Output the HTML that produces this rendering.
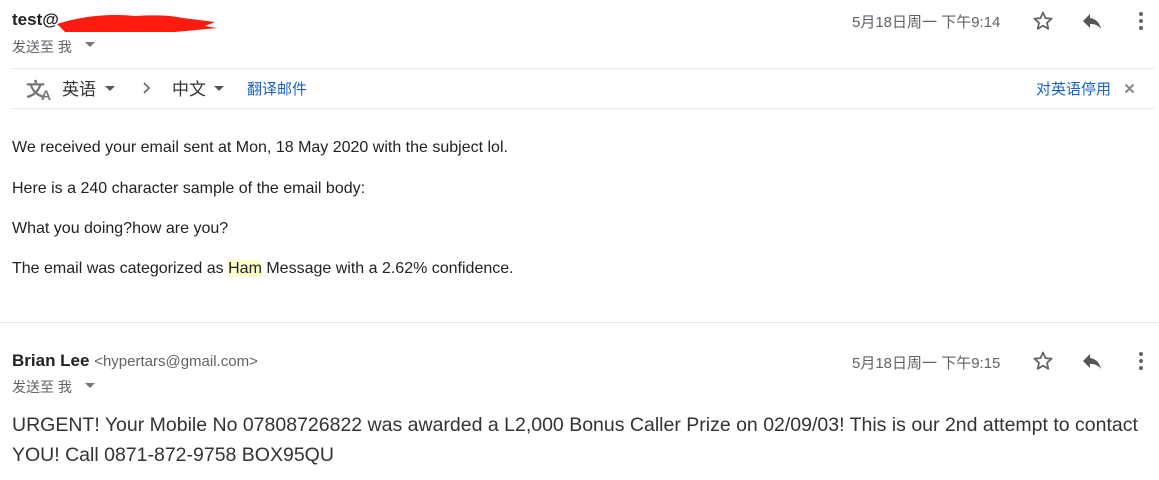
<!DOCTYPE html>
<html><head><meta charset="utf-8"><style>
*{margin:0;padding:0;box-sizing:border-box}
body{width:1159px;height:480px;background:#fff;font-family:"Liberation Sans","Noto Sans CJK SC",sans-serif;color:#222;position:relative;overflow:hidden}
.a{position:absolute;white-space:nowrap}
.g{color:#5f6368}
.b{color:#1a62c6}
.line{position:absolute;height:1px;background:#e6e8ec}
.body{font-size:16px;color:#222}
.ic{position:absolute}
</style></head><body>
<div class="a" style="left:12px;top:10px;font-size:17px;font-weight:bold;color:#222">test@</div>
<svg class="ic" style="left:55px;top:10px" width="165" height="24"><path d="M2 14 Q40 2 80 6 Q110 4 128 8 L160 12 L150 16 L162 18 L120 22 L60 22 L10 22 Z" fill="#ff1a10"/></svg>
<div class="a g" style="left:12px;top:37px;font-size:14px">发送至 我</div>
<svg class="ic" style="left:85px;top:42px" width="10" height="6"><path d="M0 0h10L5 5z" fill="#777"/></svg>
<div class="a g" style="left:852px;top:11px;font-size:15px">5月18日周一 下午9:14</div>
<svg class="ic" style="left:1031px;top:9px" width="24" height="24" viewBox="0 0 24 24"><path d="M12 3.5l2.5 5.6 6.1.6-4.6 4.1 1.3 6-5.3-3.1-5.3 3.1 1.3-6-4.6-4.1 6.1-.6z" fill="none" stroke="#666" stroke-width="1.8" stroke-linejoin="round"/></svg>
<svg class="ic" style="left:1080px;top:9px" width="24" height="24" viewBox="0 0 24 24"><path d="M10 9V5l-7 7 7 7v-4.1c5 0 8.5 1.6 11 5.1-1-5-4-10-11-11z" fill="#555"/></svg>
<svg class="ic" style="left:1131px;top:9px" width="20" height="24"><circle cx="10" cy="5" r="2" fill="#666"/><circle cx="10" cy="12" r="2" fill="#666"/><circle cx="10" cy="19" r="2" fill="#666"/></svg>

<div class="line" style="left:12px;top:68px;width:1143px"></div>
<div class="line" style="left:12px;top:108px;width:1143px"></div>
<div class="a" style="left:26px;top:75px;font-size:19px;color:#777;font-weight:bold">文<span style="font-size:14px;position:relative;top:4px;left:-4px">A</span></div>
<div class="a" style="left:62px;top:75px;font-size:17px;color:#333">英语</div>
<svg class="ic" style="left:105px;top:86px" width="10" height="6"><path d="M0 0h10L5 5z" fill="#555"/></svg>
<svg class="ic" style="left:142px;top:81px" width="10" height="14"><path d="M2 2l5 5-5 5" fill="none" stroke="#666" stroke-width="1.6"/></svg>
<div class="a" style="left:172px;top:75px;font-size:17px;color:#333">中文</div>
<svg class="ic" style="left:214px;top:86px" width="10" height="6"><path d="M0 0h10L5 5z" fill="#555"/></svg>
<div class="a b" style="left:247px;top:78px;font-size:15px">翻译邮件</div>
<div class="a b" style="left:1036px;top:78px;font-size:15px">对英语停用</div>
<svg class="ic" style="left:1124px;top:83px" width="11" height="11"><path d="M1.5 1.5l8 8M9.5 1.5l-8 8" stroke="#888" stroke-width="2"/></svg>

<div class="a body" style="left:12px;top:139px">We received your email sent at Mon, 18 May 2020 with the subject lol.</div>
<div class="a body" style="left:12px;top:180px">Here is a 240 character sample of the email body:</div>
<div class="a body" style="left:12px;top:220px">What you doing?how are you?</div>
<div class="a body" style="left:12px;top:260px">The email was categorized as <span style="background:#ffffcc">Ham</span> Message with a 2.62% confidence.</div>

<div class="line" style="left:0;top:322px;width:1159px"></div>

<div class="a" style="left:12px;top:351px;font-size:17px;font-weight:bold;color:#222">Brian Lee <span style="font-size:15px;font-weight:normal;color:#5f6368">&lt;hypertars@gmail.com&gt;</span></div>
<div class="a g" style="left:12px;top:377px;font-size:14px">发送至 我</div>
<svg class="ic" style="left:85px;top:383px" width="10" height="6"><path d="M0 0h10L5 5z" fill="#777"/></svg>
<div class="a g" style="left:852px;top:352px;font-size:15px">5月18日周一 下午9:15</div>
<svg class="ic" style="left:1031px;top:349px" width="24" height="24" viewBox="0 0 24 24"><path d="M12 3.5l2.5 5.6 6.1.6-4.6 4.1 1.3 6-5.3-3.1-5.3 3.1 1.3-6-4.6-4.1 6.1-.6z" fill="none" stroke="#666" stroke-width="1.8" stroke-linejoin="round"/></svg>
<svg class="ic" style="left:1080px;top:349px" width="24" height="24" viewBox="0 0 24 24"><path d="M10 9V5l-7 7 7 7v-4.1c5 0 8.5 1.6 11 5.1-1-5-4-10-11-11z" fill="#555"/></svg>
<svg class="ic" style="left:1131px;top:349px" width="20" height="24"><circle cx="10" cy="5" r="2" fill="#666"/><circle cx="10" cy="12" r="2" fill="#666"/><circle cx="10" cy="19" r="2" fill="#666"/></svg>

<div class="a" style="left:12px;top:410px;font-size:19.5px;color:#333;line-height:30px">URGENT! Your Mobile No 07808726822 was awarded a L2,000 Bonus Caller Prize on 02/09/03! This is our 2nd attempt to contact<br>YOU! Call 0871-872-9758 BOX95QU</div>
</body></html>
